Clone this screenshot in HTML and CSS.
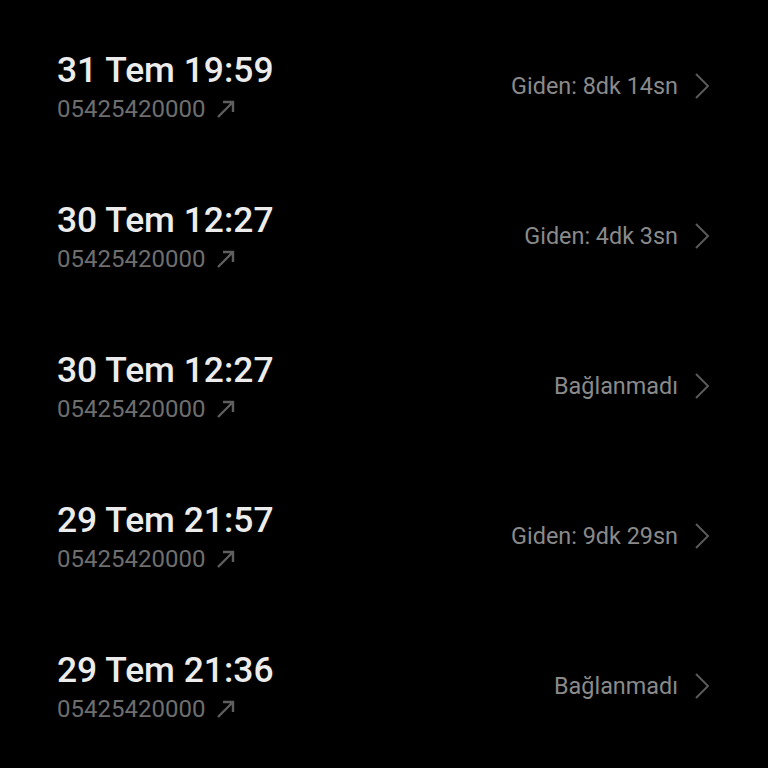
FILE: index.html
```html
<!DOCTYPE html>
<html>
<head>
    <title>Arama Geçmişi</title>
    <link rel="stylesheet" href="styles.css">
</head>
<body>
    <ul class="call-list">
        <li class="call-row">
            <div class="call-info">
                <div class="call-date">31 Tem 19:59</div>
                <div class="call-number">05425420000
                    <svg class="out-icon" width="20" height="20" viewBox="0 0 20 20"><path d="M2 18 L17 3 M7 3 H17 V13" fill="none" stroke="#5e5e5e" stroke-width="2.4"/></svg>
                </div>
            </div>
            <div class="call-status">Giden: 8dk 14sn
                <svg class="chevron" width="16" height="28" viewBox="0 0 16 28"><path d="M2 2 L14 14 L2 26" fill="none" stroke="#5a5a5a" stroke-width="2"/></svg>
            </div>
        </li>
        <li class="call-row">
            <div class="call-info">
                <div class="call-date">30 Tem 12:27</div>
                <div class="call-number">05425420000
                    <svg class="out-icon" width="20" height="20" viewBox="0 0 20 20"><path d="M2 18 L17 3 M7 3 H17 V13" fill="none" stroke="#5e5e5e" stroke-width="2.4"/></svg>
                </div>
            </div>
            <div class="call-status">Giden: 4dk 3sn
                <svg class="chevron" width="16" height="28" viewBox="0 0 16 28"><path d="M2 2 L14 14 L2 26" fill="none" stroke="#5a5a5a" stroke-width="2"/></svg>
            </div>
        </li>
        <li class="call-row">
            <div class="call-info">
                <div class="call-date">30 Tem 12:27</div>
                <div class="call-number">05425420000
                    <svg class="out-icon" width="20" height="20" viewBox="0 0 20 20"><path d="M2 18 L17 3 M7 3 H17 V13" fill="none" stroke="#5e5e5e" stroke-width="2.4"/></svg>
                </div>
            </div>
            <div class="call-status">Bağlanmadı
                <svg class="chevron" width="16" height="28" viewBox="0 0 16 28"><path d="M2 2 L14 14 L2 26" fill="none" stroke="#5a5a5a" stroke-width="2"/></svg>
            </div>
        </li>
        <li class="call-row">
            <div class="call-info">
                <div class="call-date">29 Tem 21:57</div>
                <div class="call-number">05425420000
                    <svg class="out-icon" width="20" height="20" viewBox="0 0 20 20"><path d="M2 18 L17 3 M7 3 H17 V13" fill="none" stroke="#5e5e5e" stroke-width="2.4"/></svg>
                </div>
            </div>
            <div class="call-status">Giden: 9dk 29sn
                <svg class="chevron" width="16" height="28" viewBox="0 0 16 28"><path d="M2 2 L14 14 L2 26" fill="none" stroke="#5a5a5a" stroke-width="2"/></svg>
            </div>
        </li>
        <li class="call-row">
            <div class="call-info">
                <div class="call-date">29 Tem 21:36</div>
                <div class="call-number">05425420000
                    <svg class="out-icon" width="20" height="20" viewBox="0 0 20 20"><path d="M2 18 L17 3 M7 3 H17 V13" fill="none" stroke="#5e5e5e" stroke-width="2.4"/></svg>
                </div>
            </div>
            <div class="call-status">Bağlanmadı
                <svg class="chevron" width="16" height="28" viewBox="0 0 16 28"><path d="M2 2 L14 14 L2 26" fill="none" stroke="#5a5a5a" stroke-width="2"/></svg>
            </div>
        </li>
    </ul>
</body>
</html>
```

FILE: styles.css
```css
body {
    margin: 0;
    background-color: #000;
    font-family: Roboto, "Noto Sans", sans-serif;
}

.call-list {
    list-style: none;
    margin: 0;
    padding: 11px 0 0 0;
}

.call-row {
    display: flex;
    align-items: center;
    justify-content: space-between;
    padding: 38px 58px 38px 57px;
}

.call-date {
    color: #ececec;
    font-size: 35.4px;
    font-weight: 500;
    line-height: 42px;
}

.call-number {
    display: flex;
    align-items: center;
    gap: 11px;
    margin-top: 4px;
    color: #6e6e6e;
    font-size: 24px;
    line-height: 28px;
}

.call-status {
    display: flex;
    align-items: center;
    gap: 16px;
    color: #8a8a8a;
    font-size: 23.4px;
    line-height: 28px;
}
```
